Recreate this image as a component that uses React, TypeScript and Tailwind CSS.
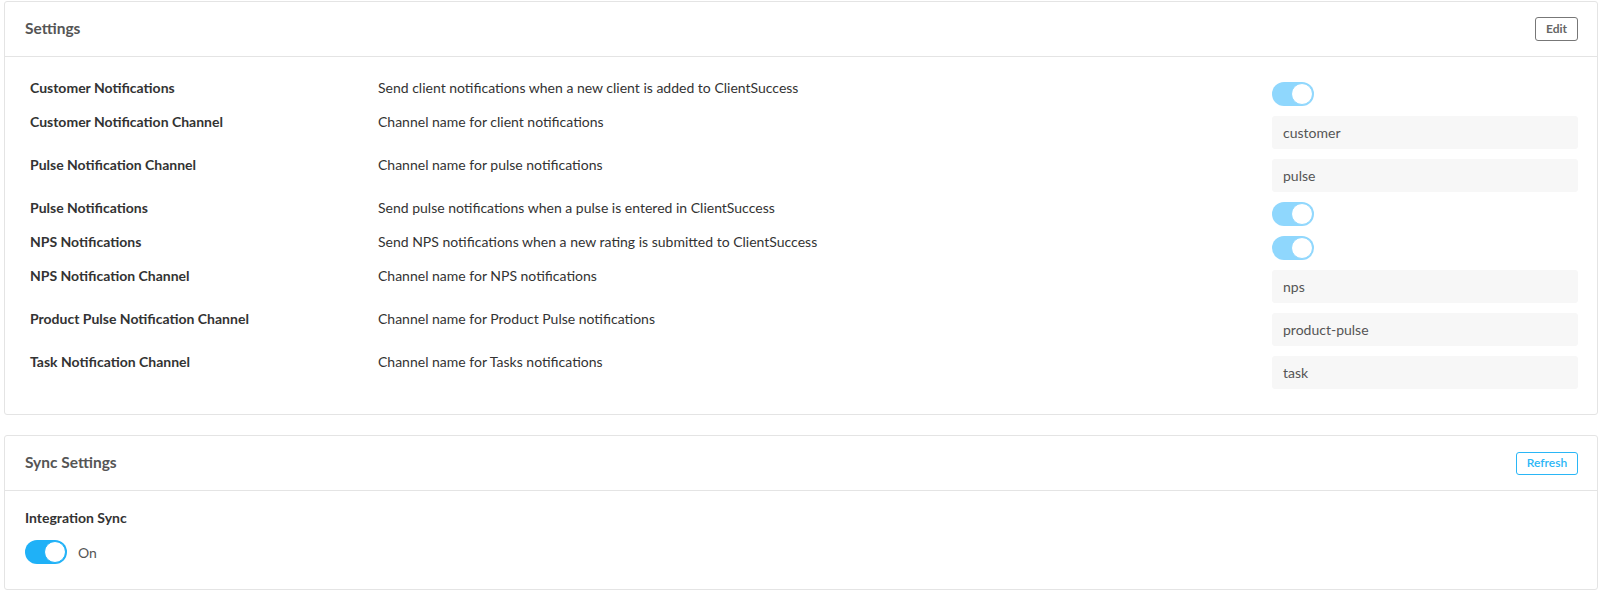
import React from "react";

type Row = {
  label: string;
  description: string;
  kind: "toggle" | "input";
  value?: string;
};

const rows: Row[] = [
  { label: "Customer Notifications", description: "Send client notifications when a new client is added to ClientSuccess", kind: "toggle" },
  { label: "Customer Notification Channel", description: "Channel name for client notifications", kind: "input", value: "customer" },
  { label: "Pulse Notification Channel", description: "Channel name for pulse notifications", kind: "input", value: "pulse" },
  { label: "Pulse Notifications", description: "Send pulse notifications when a pulse is entered in ClientSuccess", kind: "toggle" },
  { label: "NPS Notifications", description: "Send NPS notifications when a new rating is submitted to ClientSuccess", kind: "toggle" },
  { label: "NPS Notification Channel", description: "Channel name for NPS notifications", kind: "input", value: "nps" },
  { label: "Product Pulse Notification Channel", description: "Channel name for Product Pulse notifications", kind: "input", value: "product-pulse" },
  { label: "Task Notification Channel", description: "Channel name for Tasks notifications", kind: "input", value: "task" },
];

function Toggle({ active }: { active?: boolean }) {
  return (
    <div
      className={`w-[42px] h-[24px] rounded-full flex items-center justify-end p-[1px] ${
        active ? "bg-[#1fb1f7]" : "bg-[#8fd7fd]"
      }`}
    >
      <div
        className={`w-[22px] h-[22px] rounded-full bg-white border ${
          active ? "border-[#1fb1f7]" : "border-[#8fd7fd]"
        }`}
      />
    </div>
  );
}

export default function App() {
  return (
    <div
      className="w-full min-h-screen bg-white pl-[4px] pr-[10px] pt-[1px] text-[#333]"
      style={{ fontFamily: "Lato, 'Open Sans', sans-serif" }}
    >
      {/* Settings */}
      <div className="border border-[#e4e4e4] rounded-[3px]">
        <div className="h-[55px] flex items-center justify-between pl-[20px] pr-[19px] border-b border-[#e4e4e4]">
          <h2 className="text-[15.5px] font-bold text-[#555]">Settings</h2>
          <button className="w-[43px] h-[24px] border border-[#777] rounded-[3px] text-[12px] font-bold text-[#666]">
            Edit
          </button>
        </div>
        <div className="pt-[25px] pb-[25px] pl-[25px] pr-[19px] flex flex-col gap-[10px]">
          {rows.map((row) => (
            <div key={row.label} className="grid grid-cols-[348px_1fr_306px] items-start">
              <div className="text-[14px] leading-[13px] -mt-[1px] font-bold text-[#333]">{row.label}</div>
              <div className="text-[14px] leading-[13px] -mt-[1px] text-[#333]">{row.description}</div>
              <div>
                {row.kind === "toggle" ? (
                  <Toggle />
                ) : (
                  <div className="h-[33px] bg-[#f7f7f7] rounded-[3px] flex items-center px-[11px] text-[14px] text-[#555]">
                    {row.value}
                  </div>
                )}
              </div>
            </div>
          ))}
        </div>
      </div>

      {/* Sync Settings */}
      <div className="mt-[20px] border border-[#e4e4e4] rounded-[3px]">
        <div className="h-[55px] flex items-center justify-between pl-[20px] pr-[19px] border-b border-[#e4e4e4]">
          <h2 className="text-[15.5px] font-bold text-[#555]">Sync Settings</h2>
          <button className="w-[62px] h-[23px] border border-[#2ab6f6] rounded-[3px] text-[12px] font-semibold text-[#2ab6f6]">
            Refresh
          </button>
        </div>
        <div className="pt-[20px] pb-[25px] px-[20px]">
          <div className="text-[14px] leading-[14px] font-bold text-[#333]">Integration Sync</div>
          <div className="mt-[15px] flex items-center gap-[11px]">
            <Toggle active />
            <span className="text-[14px] text-[#555]">On</span>
          </div>
        </div>
      </div>
    </div>
  );
}
